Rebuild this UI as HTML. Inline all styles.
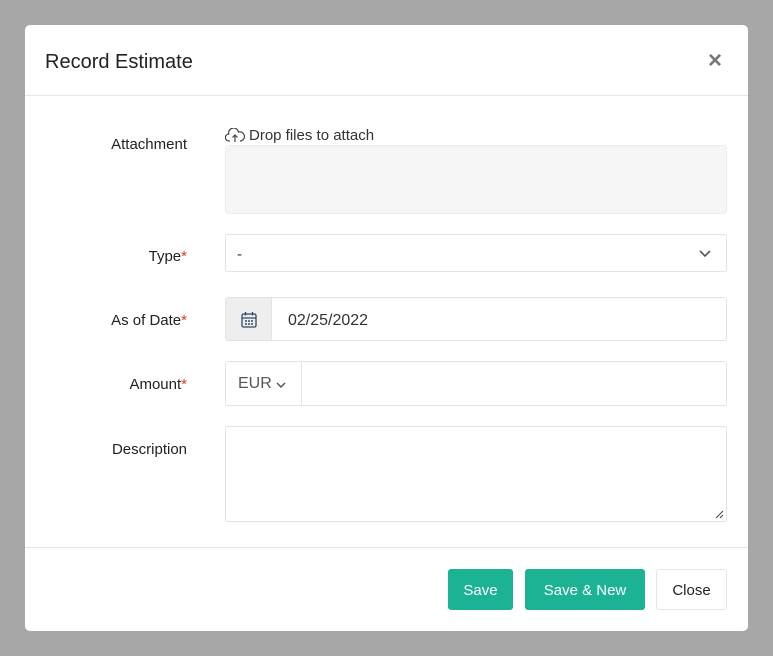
<!DOCTYPE html>
<html><head><style>
*{box-sizing:border-box;margin:0;padding:0}
body{width:773px;height:656px;background:#a7a7a7;font-family:"Liberation Sans",sans-serif;color:#333;position:relative;overflow:hidden}
.m{position:absolute;left:25px;top:25px;width:723px;height:606px;background:#fff;border-radius:5px}
.abs{position:absolute}
.lbl{position:absolute;right:561px;font-size:15px;color:#222;text-align:right;white-space:nowrap}
.req{color:#d9381e}
.box{position:absolute;border:1px solid #e3e3e3;border-radius:3px;background:#fff}
.btn{position:absolute;top:544px;height:41px;padding-top:2px;border-radius:3px;font-size:15px;display:flex;align-items:center;justify-content:center}
.g{background:#1bb394;color:#fff}
</style></head><body>
<div class="m">
  <div class="abs" style="left:20px;top:26px;font-size:20px;color:#222">Record Estimate</div>
  <div class="abs" style="left:683px;top:22px;font-size:24px;color:#777;font-weight:bold">×</div>
  <div class="abs" style="left:0;top:70px;width:723px;height:1px;background:#e5e5e5"></div>

  <div class="lbl" style="top:111px">Attachment</div>
  <div class="abs" style="left:200px;top:102px;font-size:15px;color:#333;display:flex;align-items:center">
    <svg width="20" height="16" viewBox="0 0 20 16" fill="none" stroke="#444" stroke-width="1.2"><path d="M5 13H4a3.5 3.5 0 0 1-.3-7A5 5 0 0 1 13.5 4 4 4 0 0 1 16 13h-1"/><path d="M10 14V7M7.5 9.5 10 7l2.5 2.5"/></svg>
    <span style="margin-left:4px">Drop files to attach</span></div>
  <div class="box" style="left:200px;top:120px;width:502px;height:69px;background:#f5f5f5;border-color:#ececec"></div>

  <div class="lbl" style="top:223px">Type<span class="req">*</span></div>
  <div class="box" style="left:200px;top:209px;width:502px;height:38px"><span class="abs" style="left:11px;top:11px;font-size:15px">-</span>
    <svg class="abs" style="left:473px;top:15px" width="12" height="8" viewBox="0 0 12 8"><path d="M1 1l5 5 5-5" stroke="#555" stroke-width="1.6" fill="none"/></svg></div>

  <div class="lbl" style="top:287px">As of Date<span class="req">*</span></div>
  <div class="box" style="left:200px;top:272px;width:502px;height:44px">
    <div class="abs" style="left:0;top:0;width:46px;height:42px;background:#eee;border-right:1px solid #e3e3e3">
      <svg class="abs" style="left:15px;top:13px" width="16" height="17" viewBox="0 0 16 17" fill="none" stroke="#2c4a6b" stroke-width="1.3"><rect x="1" y="3" width="14" height="13" rx="1.5"/><path d="M1 7h14M4.5 1v3.5M11.5 1v3.5"/><path d="M4 10h2M7 10h2M10 10h2M4 13h2M7 13h2M10 13h2" stroke-width="1.6"/></svg></div>
    <span class="abs" style="left:62px;top:14px;font-size:16px">02/25/2022</span></div>

  <div class="lbl" style="top:351px">Amount<span class="req">*</span></div>
  <div class="box" style="left:200px;top:336px;width:502px;height:45px">
    <div class="abs" style="left:0;top:0;width:76px;height:43px;border-right:1px solid #e3e3e3">
      <span class="abs" style="left:12px;top:13px;font-size:16px;color:#555">EUR</span>
      <svg class="abs" style="left:50px;top:20px" width="10" height="7" viewBox="0 0 10 7"><path d="M1 1l4 4 4-4" stroke="#555" stroke-width="1.5" fill="none"/></svg></div></div>

  <div class="lbl" style="top:416px">Description</div>
  <div class="box" style="left:200px;top:401px;width:502px;height:96px">
    <svg class="abs" style="right:2px;bottom:2px" width="10" height="10" viewBox="0 0 10 10"><path d="M9 2 2 9M9 6 6 9" stroke="#444" stroke-width="1"/></svg></div>

  <div class="abs" style="left:0;top:522px;width:723px;height:1px;background:#e5e5e5"></div>
  <div class="btn g" style="left:423px;width:65px">Save</div>
  <div class="btn g" style="left:500px;width:120px">Save &amp; New</div>
  <div class="btn" style="left:631px;width:71px;border:1px solid #e5e5e5;color:#222">Close</div>
</div>
</body></html>
